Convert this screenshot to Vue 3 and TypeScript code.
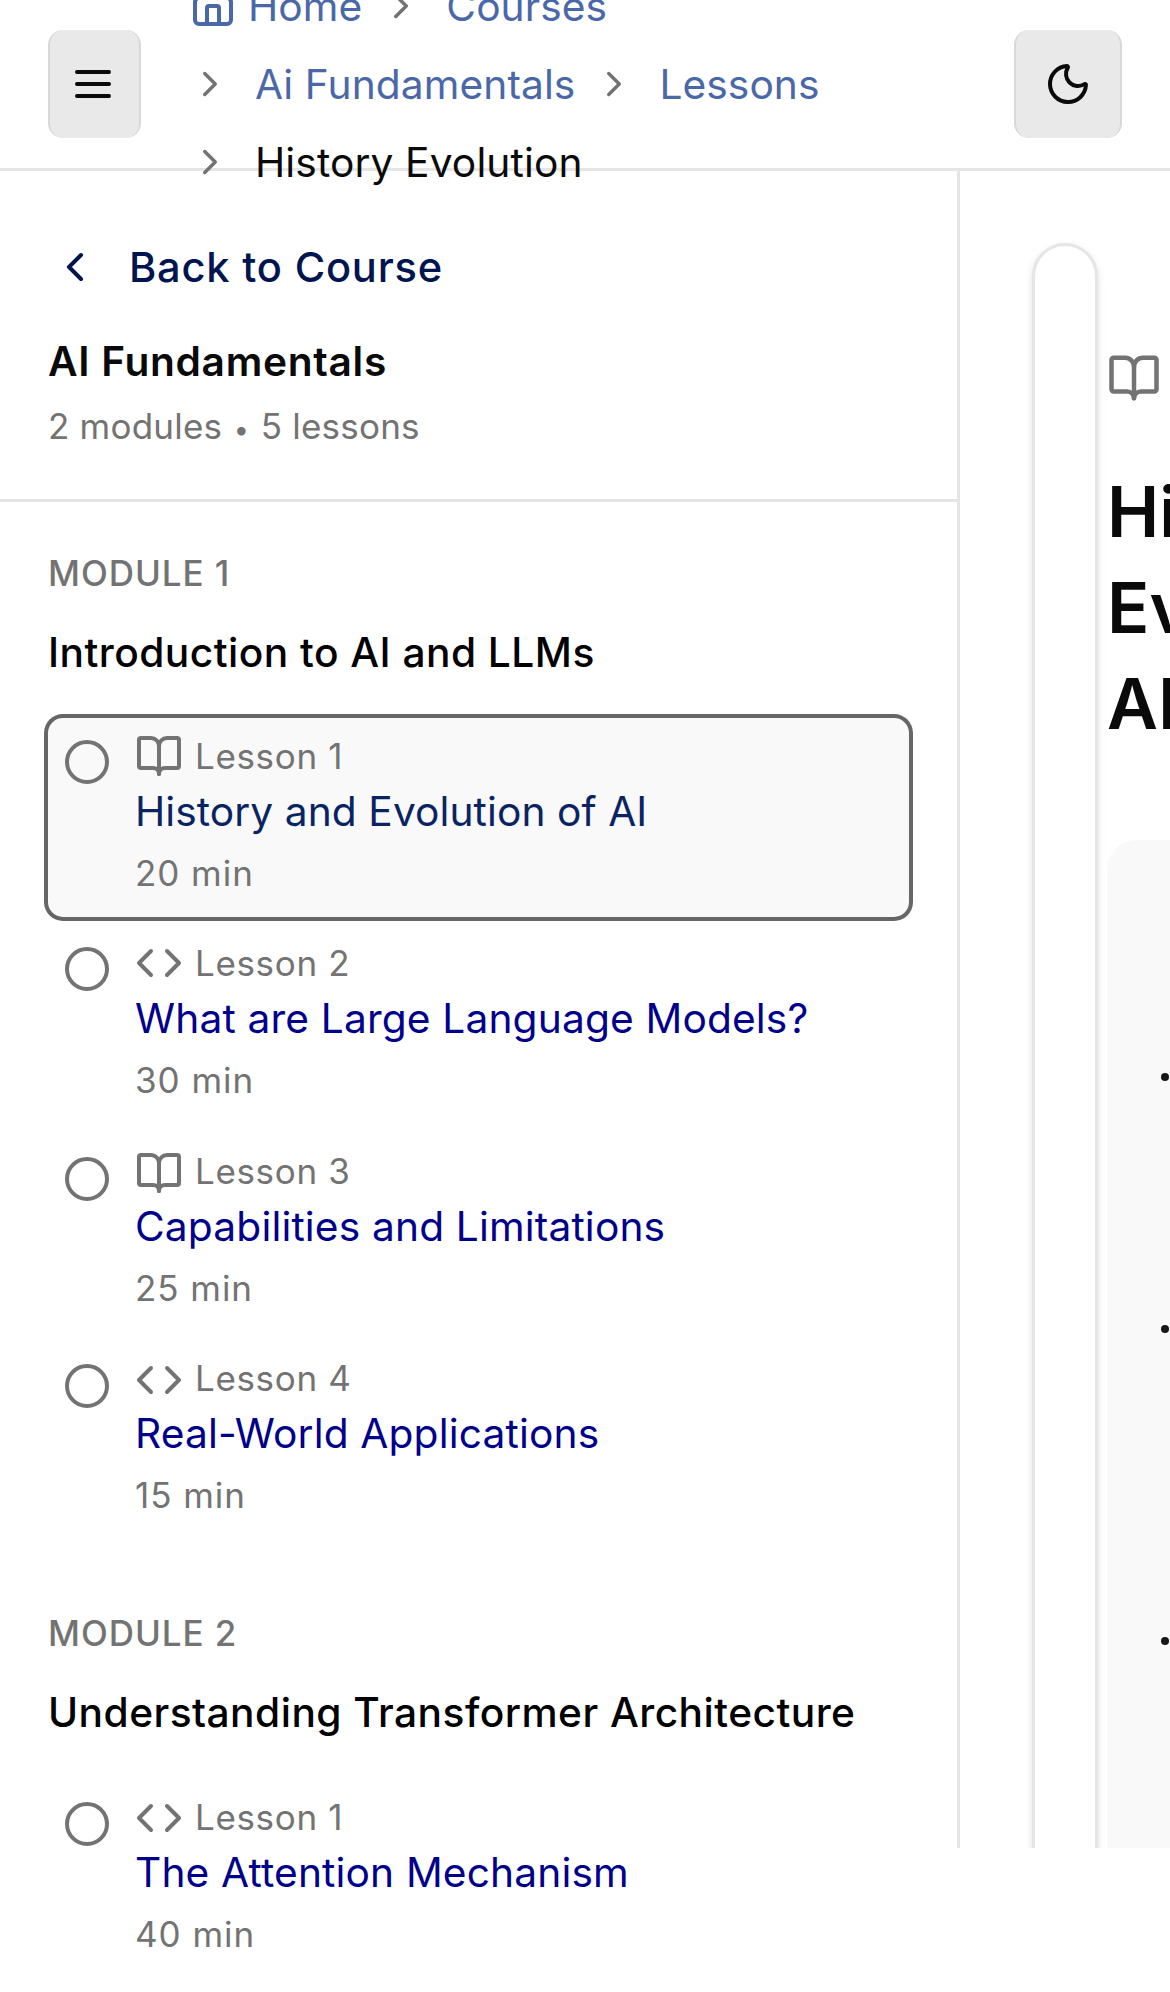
<script setup lang="ts">
type IconName = 'book' | 'code'

interface Lesson {
  title: string
  minutes: number
  icon: IconName
  active?: boolean
}

interface Module {
  title: string
  lessons: Lesson[]
}

const modules: Module[] = [
  {
    title: 'Introduction to AI and LLMs',
    lessons: [
      { title: 'History and Evolution of AI', minutes: 20, icon: 'book', active: true },
      { title: 'What are Large Language Models?', minutes: 30, icon: 'code' },
      { title: 'Capabilities and Limitations', minutes: 25, icon: 'book' },
      { title: 'Real-World Applications', minutes: 15, icon: 'code' },
    ],
  },
  {
    title: 'Understanding Transformer Architecture',
    lessons: [{ title: 'The Attention Mechanism', minutes: 40, icon: 'code' }],
  },
]

const crumbs = ['Home', 'Courses', 'Ai Fundamentals', 'Lessons', 'History Evolution']

const iconPaths: Record<IconName, string[]> = {
  book: [
    'M12 7v14',
    'M3 18a1 1 0 0 1-1-1V4a1 1 0 0 1 1-1h5a4 4 0 0 1 4 4 4 4 0 0 1 4-4h5a1 1 0 0 1 1 1v13a1 1 0 0 1-1 1h-6a3 3 0 0 0-3 3 3 3 0 0 0-3-3z',
  ],
  code: ['m16 18 6-6-6-6', 'm8 6-6 6 6 6'],
}
</script>

<template>
  <div class="page">
    <header class="topbar">
      <button class="icon-btn menu-btn" aria-label="Menu">
        <svg class="icon" viewBox="0 0 24 24"><path d="M4 6h16M4 12h16M4 18h16" /></svg>
      </button>
      <nav class="crumbs">
        <div v-for="(crumb, i) in crumbs" :key="crumb" class="crumb">
          <svg v-if="i > 0" class="icon crumb-sep" viewBox="0 0 24 24"><path d="m9 18 6-6-6-6" /></svg>
          <a class="crumb-link" :class="{ current: i === crumbs.length - 1 }">
            <svg v-if="i === 0" class="icon" viewBox="0 0 24 24">
              <path d="M15 21v-8a1 1 0 0 0-1-1h-4a1 1 0 0 0-1 1v8" />
              <path d="M3 10a2 2 0 0 1 .709-1.528l7-5.999a2 2 0 0 1 2.582 0l7 5.999A2 2 0 0 1 21 10v9a2 2 0 0 1-2 2H5a2 2 0 0 1-2-2z" />
            </svg>
            <span>{{ crumb }}</span>
          </a>
        </div>
      </nav>
      <button class="icon-btn theme-btn" aria-label="Toggle theme">
        <svg class="icon" viewBox="0 0 24 24">
          <path d="M20.985 12.486a9 9 0 1 1-9.473-9.472c.405-.022.617.46.402.803a6 6 0 0 0 8.268 8.268c.344-.215.825-.004.803.401" />
        </svg>
      </button>
    </header>

    <div class="body">
      <aside class="sidebar">
        <div class="course">
          <a class="back">
            <svg class="icon" viewBox="0 0 24 24"><path d="m15 18-6-6 6-6" /></svg>
            <span>Back to Course</span>
          </a>
          <h2 class="course-title">AI Fundamentals</h2>
          <p class="course-meta">2 modules <span class="sep">•</span> 5 lessons</p>
        </div>

        <section v-for="(mod, m) in modules" :key="mod.title" class="module">
          <p class="module-label">MODULE {{ m + 1 }}</p>
          <h3 class="module-title">{{ mod.title }}</h3>
          <div class="lessons">
            <div v-for="(lesson, i) in mod.lessons" :key="lesson.title" class="lesson" :class="{ active: lesson.active }">
              <svg class="icon status" viewBox="0 0 24 24"><circle cx="12" cy="12" r="10" /></svg>
              <div class="lesson-text">
                <div class="lesson-head">
                  <svg class="icon" viewBox="0 0 24 24">
                    <path v-for="d in iconPaths[lesson.icon]" :key="d" :d="d" />
                  </svg>
                  <span>Lesson {{ i + 1 }}</span>
                </div>
                <a class="lesson-title">{{ lesson.title }}</a>
                <span class="lesson-time">{{ lesson.minutes }} min</span>
              </div>
            </div>
          </div>
        </section>
      </aside>

      <main class="main">
        <div class="card"></div>
        <article class="content">
          <svg class="icon content-icon" viewBox="0 0 24 24">
            <path v-for="d in iconPaths.book" :key="d" :d="d" />
          </svg>
          <h1 class="content-title">History and<br />Evolution of<br />AI</h1>
          <div class="panel">
            <i class="dot"></i>
            <i class="dot"></i>
            <i class="dot"></i>
          </div>
        </article>
      </main>
    </div>
  </div>
</template>

<style>
html,
body {
  margin: 0;
  background: #fff;
  overflow: hidden;
}
</style>

<style scoped>
.page {
  width: 1170px;
  height: 1992px;
  overflow: hidden;
  background: #fff;
  color: #0a0a0a;
  font-family: Inter, 'Liberation Sans', sans-serif;
}

.page * {
  box-sizing: border-box;
}

h1,
h2,
h3,
p {
  margin: 0;
}

.icon {
  display: block;
  flex: none;
  width: 48px;
  height: 48px;
  fill: none;
  stroke: currentColor;
  stroke-width: 2;
  stroke-linecap: round;
  stroke-linejoin: round;
}

.topbar {
  display: flex;
  align-items: center;
  height: 171px;
  padding: 0 48px;
  border-bottom: 3px solid #e5e5e5;
}

.icon-btn {
  display: flex;
  flex: none;
  align-items: center;
  justify-content: center;
  height: 108px;
  padding: 0;
  border: 0 solid #d8d8d8;
  border-width: 0 2px;
  border-radius: 15px;
  background: #e9e9e9;
  color: #0a0a0a;
}

.menu-btn {
  width: 93px;
  padding-right: 3px;
}

.theme-btn {
  width: 108px;
}

.crumbs {
  display: flex;
  flex: 1;
  flex-wrap: wrap;
  gap: 18px;
  margin: 0 48px;
  font-size: 40.7px;
  line-height: 60px;
  letter-spacing: 0.08px;
}

.crumb {
  display: flex;
  align-items: center;
  gap: 24px;
  height: 60px;
  white-space: nowrap;
}

.crumb-sep {
  width: 42px;
  height: 42px;
  color: #737373;
}

.crumb-link {
  display: flex;
  align-items: center;
  gap: 11px;
  color: #4a68a8;
}

.crumb-link span {
  margin-top: 2px;
}

.crumb-link.current {
  color: #0a0a0a;
  letter-spacing: 0.12px;
}

.body {
  display: flex;
  height: 1677px;
}

.sidebar {
  flex: none;
  width: 960px;
  border-right: 3px solid #e5e5e5;
}

.course {
  height: 331px;
  padding: 48px 48px 0;
  border-bottom: 3px solid #e5e5e5;
}

.back {
  display: flex;
  align-items: center;
  gap: 30px;
  height: 96px;
  padding-left: 3px;
  color: #00144f;
  font-size: 41.6px;
  font-weight: 450;
  letter-spacing: 0.8px;
}

.course-title {
  margin-top: 17px;
  font-size: 40.7px;
  font-weight: 600;
  line-height: 60px;
  letter-spacing: 0.68px;
}

.course-meta {
  margin-top: 10px;
  color: #737373;
  font-size: 35px;
  line-height: 48px;
  letter-spacing: 0.21px;
}

.sep {
  padding: 0 1.5px;
  font-size: 27px;
  line-height: 1;
}

.module {
  padding: 47px 48px 0;
}

.module + .module {
  padding-top: 70px;
}

.module-label {
  color: #737373;
  font-size: 35px;
  font-weight: 450;
  line-height: 48px;
  letter-spacing: 0.95px;
}

.module-title {
  margin-top: 26px;
  color: #000;
  font-size: 40.7px;
  font-weight: 480;
  line-height: 60px;
  letter-spacing: 0.46px;
  white-space: nowrap;
}

.lessons {
  display: flex;
  flex-direction: column;
  gap: 8.33px;
  margin-top: 35px;
}

.module + .module .lessons {
  margin-top: 36px;
}

.lesson {
  display: flex;
  gap: 24px;
  width: 861px;
  height: 199px;
  padding: 14px 15px 0;
  border-radius: 15px;
}

.lesson.active {
  background: #f9f9f9;
  box-shadow: 0 0 0 4px #666;
}

.status {
  margin-top: 6px;
  color: #737373;
}

.lesson-text {
  display: flex;
  flex-direction: column;
}

.lesson-head {
  display: flex;
  align-items: center;
  gap: 12px;
  height: 48px;
  color: #737373;
  font-size: 35px;
  line-height: 48px;
  letter-spacing: 0.65px;
}

.lesson:nth-child(n + 3) .icon {
  transform: translateY(2px);
}

.module + .module .icon {
  transform: translateY(1px);
}

.lesson-title {
  margin-top: 2px;
  color: #00008b;
  font-size: 40.7px;
  line-height: 60px;
  letter-spacing: 0.15px;
  white-space: nowrap;
}

.lesson.active .lesson-title {
  color: #0a2463;
  letter-spacing: 0.08px;
}

.lesson-time {
  margin-top: 7px;
  color: #737373;
  font-size: 35px;
  line-height: 48px;
  letter-spacing: 0.95px;
}

.main {
  display: flex;
  flex: 1;
  min-width: 0;
  padding: 72px 0 0 72px;
  overflow: hidden;
}

.card {
  flex: none;
  width: 66px;
  height: 1800px;
  border: 3px solid #e5e5e5;
  border-radius: 33px;
  box-shadow: 0 3px 9px rgba(0, 0, 0, 0.1), 0 3px 6px -3px rgba(0, 0, 0, 0.1);
}

.content {
  flex: none;
  width: 600px;
  margin-left: 9px;
  padding-top: 108px;
}

.content-icon {
  width: 54px;
  height: 54px;
  color: #737373;
}

.content-title {
  margin-top: 59px;
  font-size: 70px;
  font-weight: 640;
  line-height: 96px;
}

.panel {
  height: 1100px;
  margin-top: 88px;
  padding: 233px 0 0 54px;
  border-radius: 30px;
  background: #f9f9f9;
}

.dot {
  display: block;
  width: 8px;
  height: 8px;
  border-radius: 50%;
  background: #171717;
}

.dot + .dot {
  margin-top: 244px;
}

.dot + .dot + .dot {
  margin-top: 304px;
}
</style>
